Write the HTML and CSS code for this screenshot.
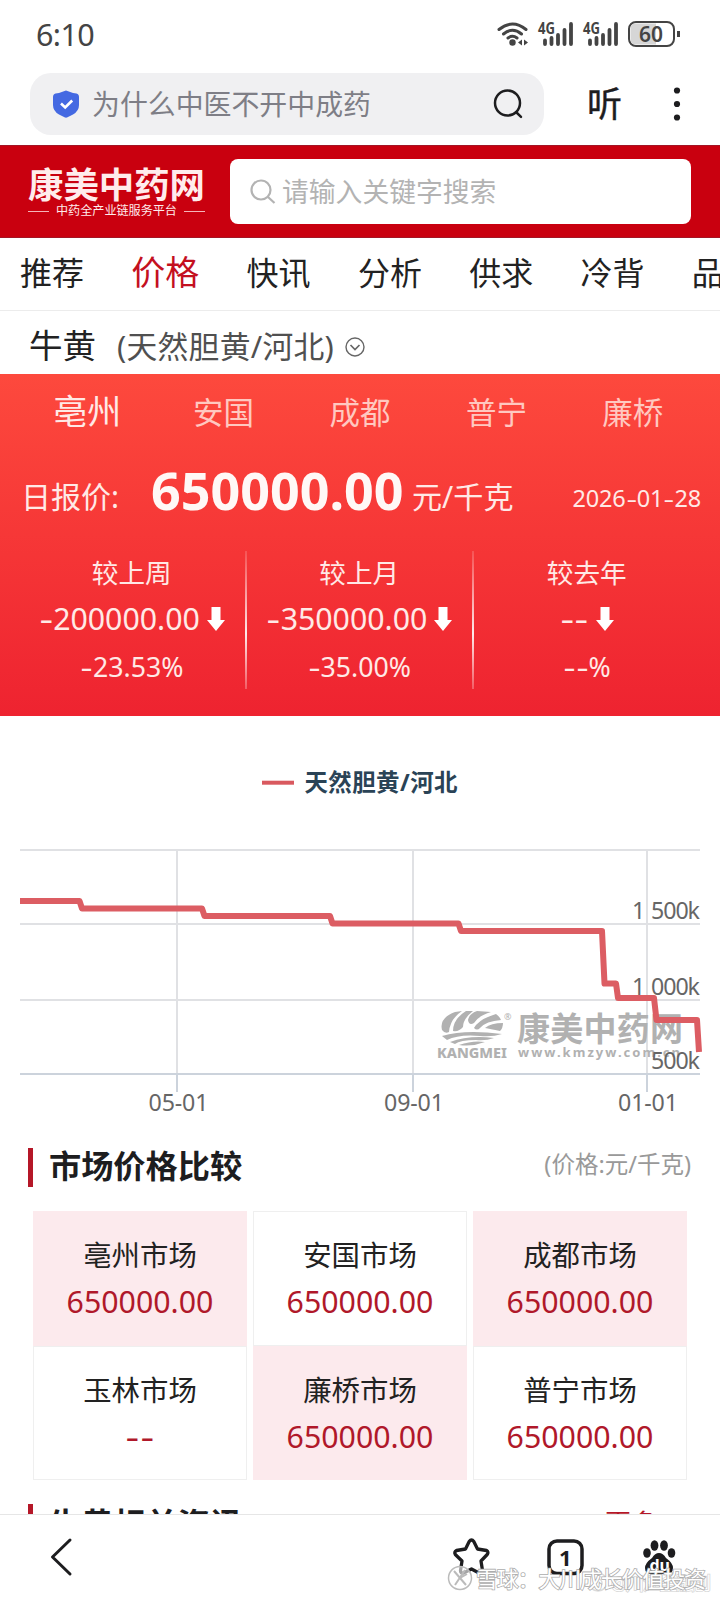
FILE: index.html
```
<!DOCTYPE html>
<html lang="zh-CN">
<head>
<meta charset="utf-8">
<title>康美中药网</title>
<link rel="stylesheet" href="styles.css">
</head>
<body>
<div class="phone">
  <div class="status">
    <span class="time">6:10</span>
    <svg class="status-icons" width="186" height="32" viewBox="494 18 186 32">
      <g fill="none" stroke="#444" stroke-width="3" stroke-linecap="round">
        <path d="M499 29.5Q512.500 18.500 526 29.500"/><path d="M503.500 34Q512.500 26.500 521.500 34"/><path d="M508 38Q512.500 34.500 517 38"/>
      </g>
      <circle cx="512.500" cy="42.500" r="3.200" fill="#444"/>
      <path d="M518 42.500l4-3v6zM528 42.500l-4-3v6z" fill="#444"/>
      <g id="sig">
        <text x="538" y="34" class="net" textLength="17" lengthAdjust="spacingAndGlyphs">4G</text>
        <path d="M545 40.500v3.500M551.500 38v6M558 35v9M564.500 30v14M571 24v20" stroke="#444" stroke-width="3.800" stroke-linecap="round"/>
      </g>
      <use href="#sig" x="45"/>
      <rect x="629" y="22" width="45" height="24" rx="7" fill="#fff" stroke="#444" stroke-width="2"/>
      <path d="M636 23.500h20v21h-20q-5.500 0-5.500-5.500v-10q0-5.500 5.500-5.500z" fill="#d6d6d6"/>
      <path d="M678.500 31v6" stroke="#444" stroke-width="3"/>
      <text x="639" y="41.500" class="batt" textLength="24" lengthAdjust="spacingAndGlyphs">60</text>
    </svg>
  </div>

  <div class="address">
    <div class="pill">
      <svg class="shield" width="26" height="28" viewBox="0 0 26 28"><path d="M13 .5Q19 3 23.500 3.500Q26 4 26 7V15Q26 21 20 24.500L14.500 27.300Q13 28 11.500 27.300L6 24.500Q0 21 0 15V7Q0 4 2.500 3.500Q7 3 13 .5Z" fill="#4469e2"/><path d="M8 13.500l4.200 4 7-7" fill="none" stroke="#fff" stroke-width="2.600"/></svg>
      <span class="query">为什么中医不开中成药</span>
      <svg width="30" height="30" viewBox="0 0 30 30" fill="none" stroke="#1d1d1f" stroke-width="2.500" stroke-linecap="round"><circle cx="14.500" cy="14" r="12.500"/><path d="M23 23l5 4.800"/></svg>
    </div>
    <span class="listen">听</span>
    <svg class="dots" width="8" height="36" viewBox="0 0 8 36" fill="#1d1d1f"><circle cx="4" cy="4.500" r="3.100"/><circle cx="4" cy="18" r="3.100"/><circle cx="4" cy="31.500" r="3.100"/></svg>
  </div>

  <header class="site">
    <div class="logo">
      <div class="logo-name">康美中药网</div>
      <div class="logo-tag"><i></i><span>中药全产业链服务平台</span><i></i></div>
    </div>
    <div class="search">
      <svg width="28" height="28" viewBox="0 0 28 28" fill="none" stroke="#b3b3b3" stroke-width="2.200"><circle cx="12" cy="12" r="9.500"/><path d="M19 19l6.500 6"/></svg>
      <span>请输入关键字搜索</span>
    </div>
  </header>

  <nav class="menu"><span>推荐</span><span class="on">价格</span><span>快讯</span><span>分析</span><span>供求</span><span>冷背</span><span>品</span></nav>

  <div class="product">
    <span class="pname">牛黄</span><span class="pspec">(天然胆黄/河北)</span>
    <svg width="20" height="20" viewBox="0 0 20 20" fill="none" stroke="#666" stroke-width="1.400"><circle cx="10" cy="10" r="9"/><path d="M5.500 8l4.500 4.500L14.500 8" stroke-width="1.700"/></svg>
  </div>

  <section class="panel">
    <div class="cities"><span class="on">亳州</span><span>安国</span><span>成都</span><span>普宁</span><span>廉桥</span></div>
    <div class="quote"><span class="qlabel">日报价:</span><strong>650000.00</strong><span class="unit">元/千克</span><span class="date">2026<em>-</em>01<em>-</em>28</span></div>
    <div class="stats">
      <div class="stat"><span class="st">较上周</span><span class="sv"><span><em>-</em>200000.00</span><svg width="18" height="24" viewBox="0 0 18 24"><path d="M4.500 0h9v13H18l-9 11L0 13h4.500z" fill="#fff"/></svg></span><span class="sp"><em>-</em>23.53%</span></div>
      <i class="rule"></i>
      <div class="stat"><span class="st">较上月</span><span class="sv"><span><em>-</em>350000.00</span><svg width="18" height="24" viewBox="0 0 18 24"><path d="M4.500 0h9v13H18l-9 11L0 13h4.500z" fill="#fff"/></svg></span><span class="sp"><em>-</em>35.00%</span></div>
      <i class="rule"></i>
      <div class="stat"><span class="st">较去年</span><span class="sv"><span><em>-</em><em>-</em></span><svg width="18" height="24" viewBox="0 0 18 24"><path d="M4.500 0h9v13H18l-9 11L0 13h4.500z" fill="#fff"/></svg></span><span class="sp"><em>-</em><em>-</em>%</span></div>
    </div>
  </section>

  <section class="chart">
    <svg width="720" height="414" viewBox="0 716 720 414">
      <path d="M262 782.700h32" stroke="#d9595f" stroke-width="4"/>
      <text x="304.500" y="791" class="legend" textLength="153">天然胆黄/河北</text>
      <path d="M20 850h680M20 924h680M20 1000h680M177 850v224M413 850v224M647 850v224" stroke="#e0e1e4" stroke-width="2"/>
      <path d="M20 1074h680M177 1074v18M413 1074v18M647 1074v18" stroke="#ccd3dc" stroke-width="2"/>
      <g fill="#b1b1b1">
        <path d="M442 1030Q439 1018 455 1012L462 1011Q450 1019 449 1032Q445 1034 442 1030ZM453 1031Q453 1019 466 1011L473 1011Q463 1019 463 1027Q459 1032 453 1031ZM468 1020Q469 1014 477 1011L491 1012Q478 1016 474 1023Q469 1026 468 1020ZM474 1028Q479 1019 496 1014Q500 1017 501 1020Q486 1021 480 1028Q477 1031 474 1028ZM485 1028Q491 1023 503 1023Q503 1028 500 1031Q490 1029 485 1028ZM442 1036Q465 1029 502 1034Q493 1037 480 1036Q459 1034 447 1040ZM450 1042Q469 1035 494 1038Q486 1041 476 1040Q460 1040 455 1044ZM459 1045Q473 1040 485 1042Q472 1047 459 1045Z"/>
        <text x="504" y="1020" class="reg">®</text>
        <text x="437" y="1058" class="wm-en" textLength="70" lengthAdjust="spacingAndGlyphs">KANGMEI</text>
        <text x="517" y="1041" class="wm-cn" textLength="166">康美中药网</text>
        <text x="518" y="1057" class="wm-url" textLength="162">www.kmzyw.com.cn</text>
      </g>
      <g class="axis">
        <text y="918.500"><tspan x="632">1 </tspan><tspan x="651" textLength="49">500k</tspan></text>
        <text y="994.500"><tspan x="632">1 </tspan><tspan x="651" textLength="49">000k</tspan></text>
        <text x="651" y="1069" textLength="49">500k</text>
        <text x="148.500" y="1111" textLength="60">05-01</text>
        <text x="384" y="1111" textLength="60">09-01</text>
        <text x="618" y="1111" textLength="60">01-01</text>
      </g>
      <path d="M20 901H79.500L82 908.500H202L204.500 916H330L332.500 923.500H458.500L461 931H602L604.500 983.500H616L618 998H654L656.500 1020H697L699 1052" fill="none" stroke="#dc5d63" stroke-width="6" stroke-linejoin="round"/>
    </svg>
  </section>

  <section class="market">
    <div class="head"><i></i><h2>市场价格比较</h2><span class="note">(价格:元/千克)</span></div>
    <div class="grid">
      <div class="cell pink"><span>亳州市场</span><b>650000.00</b></div>
      <div class="cell"><span>安国市场</span><b>650000.00</b></div>
      <div class="cell pink"><span>成都市场</span><b>650000.00</b></div>
      <div class="cell"><span>玉林市场</span><b><em>-</em><em>-</em></b></div>
      <div class="cell pink"><span>廉桥市场</span><b>650000.00</b></div>
      <div class="cell"><span>普宁市场</span><b>650000.00</b></div>
    </div>
  </section>

  <section class="news"><div class="head"><i></i><h2>牛黄相关资讯</h2><span class="more">更多</span></div></section>

  <footer class="toolbar">
    <svg class="tools" width="720" height="85" viewBox="0 1515 720 85">
      <g fill="none" stroke="#1d1d1f" stroke-width="3" stroke-linecap="round" stroke-linejoin="round">
        <path d="M70 1540L52.500 1557L70 1574"/>
        <path stroke-width="3.300" d="M469.200 1541.500Q471.500 1538.500 473.800 1541.500L477.500 1549L486.500 1550.500Q489 1552 487.200 1554.500L481 1561L482.500 1570.500Q482 1573.800 479 1573L471.500 1569L463.500 1573Q460.500 1573.500 460.500 1570.500L462 1561L455.300 1554.500Q453.800 1552 456.500 1550.500L465.500 1549Z"/>
        <rect x="549" y="1541" width="33" height="32.500" rx="8" stroke-width="3.500"/>
      </g>
      <text x="559" y="1566" class="tabs">1</text>
      <g fill="#1d1d1f"><ellipse cx="647" cy="1553" rx="3.800" ry="4.800"/><ellipse cx="654.500" cy="1545.500" rx="3.900" ry="5.200"/><ellipse cx="664" cy="1545.500" rx="3.900" ry="5.200"/><ellipse cx="671.500" cy="1553" rx="3.800" ry="4.800"/><path d="M659 1553Q663 1553 666 1558Q673 1563 673 1568Q673 1574 666 1574H652Q645 1574 645 1568Q645 1563 652 1558Q655 1553 659 1553Z"/></g>
      <text x="649.500" y="1571" class="du">du</text>
      <g class="mark2"><circle cx="598" cy="1582" r="9"/><circle cx="598" cy="1583" r="4"/><text x="611" y="1590" textLength="100">@川江金融创</text></g>
      <g class="mark1"><circle cx="460" cy="1578" r="11.500"/><path d="M454 1571l12 14M465 1570l-10 15M467 1574l-7 4"/><text x="476" y="1587" textLength="230">雪球：大川成长价值投资</text></g>
    </svg>
  </footer>
</div>
</body>
</html>
```
FILE: styles.css
```
* { box-sizing: border-box; }
body { margin: 0; background: #fff; font-family: "Noto Sans", "Noto Sans CJK SC", sans-serif; color: #222; }
.phone { width: 720px; height: 1600px; overflow: hidden; display: flex; flex-direction: column; }
.phone > * { flex: none; }
svg { display: block; flex: none; }
span, b, strong, h2 { white-space: nowrap; }
i { display: block; flex: none; }
/* wide, thin hyphen used in figures */
em { display: inline-block; width: .48em; text-align: center; font-style: normal; transform: scaleX(1.4); }

.status { height: 73px; padding: 17px 40px 0 36px; display: flex; justify-content: space-between; }
.status-icons { margin-top: 1px; }
.time { font-size: 30.5px; line-height: 34px; letter-spacing: -.6px; color: #444; }
.net { font-size: 16px; font-weight: 700; fill: #444; }
.batt { font-size: 21px; font-weight: 600; fill: #444; }

.address { height: 72px; padding-left: 30px; display: flex; align-items: flex-start; }
.pill { width: 514px; height: 62px; border-radius: 21px; background: #f0f0f2; padding: 0 21px 0 23px; display: flex; align-items: center; }
.query { flex: 1; margin-left: 13px; font-size: 27.9px; line-height: 62px; color: #7e7e86; }
.listen { margin-left: 43px; font-size: 35px; line-height: 61px; color: #1d1d1f; -webkit-text-stroke: .4px #1d1d1f; }
.dots { margin: 13px 0 0 51px; }

.site { height: 93px; background: #c9000f; padding: 13px 29px 0 28px; display: flex; justify-content: space-between; border-top: 1px solid #a31525; border-bottom: 1px solid #a31525; }
.logo { width: 177px; color: #ffecec; }
.logo-name { font-size: 35.400px; line-height: 38px; margin-top: 6px; font-weight: 700; }
.logo-tag { display: flex; align-items: center; justify-content: space-between; font-size: 12.1px; line-height: 14px; margin-top: 1px; }
.logo-tag i { width: 21px; height: 1px; background: #f5b5b9; }
.search { width: 461px; height: 65px; background: #fff; border-radius: 8px; padding-left: 19px; display: flex; align-items: center; gap: 5px; color: #b3b3b3; font-size: 26.800px; line-height: 65px; }

.menu { height: 73px; border-bottom: 1px solid #ececec; padding: 0 0 0 20px; display: flex; gap: 47.300px; font-size: 32px; line-height: 70px; overflow: hidden; }
.menu .on { font-size: 34px; line-height: 68px; color: #c4101f; }
.product { height: 63px; padding: 0 29px; display: flex; align-items: center; }
.pname { font-size: 33.500px; line-height: 63px; padding-top: 5px; }
.pspec { font-size: 30.800px; line-height: 63px; padding-top: 7px; margin-left: 21px; color: #505050; letter-spacing: .25px; }
.product svg { margin: 9px 0 0 11px; }

.panel { height: 342px; background: linear-gradient(#fd493d, #ee2330); color: #ffe9e6; }
.cities { height: 78px; padding: 0 19px; display: grid; grid-template-columns: repeat(5, 1fr); text-align: center; font-size: 30.500px; line-height: 77px; color: #ffc8c0; }
.cities .on { font-size: 34px; line-height: 74px; color: #ffe9e6; }
.quote { height: 99px; padding: 0 19px 0 21px; display: flex; align-items: flex-start; line-height: 77px; }
.qlabel { font-size: 30px; width: 130px; line-height: 89px; }
.quote strong { font-size: 52px; line-height: 76px; width: 261px; color: #fff8f6; }
.unit { font-size: 30.100px; line-height: 89px; }
.date { margin-left: auto; font-size: 23.500px; line-height: 93px; letter-spacing: -.2px; }
.stats { display: flex; height: 138px; padding-left: 18px; }
.stat { width: 227.500px; display: flex; flex-direction: column; align-items: center; }
.st { font-size: 26.600px; line-height: 44px; }
.sv { font-size: 30.300px; line-height: 48px; display: flex; align-items: center; gap: 7px; }
.sp { font-size: 26.700px; line-height: 47px; }
.rule { width: 2px; height: 138px; margin: 0 -1px; background: linear-gradient(rgba(255,255,255,.15), rgba(255,255,255,.9) 60%, rgba(255,255,255,.25)); }

.chart { height: 414px; }
.legend { font-size: 23.500px; font-weight: 700; fill: #2a4356; }
.axis { font-size: 23.200px; fill: #666; }
.wm-cn { font-size: 33px; font-weight: 700; }
.wm-en { font-size: 14px; font-weight: 800; }
.wm-url { font-size: 13px; font-weight: 700; }
.reg { font-size: 9px; }

.head { display: flex; align-items: flex-start; padding: 0 29px 0 28px; height: 39px; }
.head i { width: 5px; height: 39px; background: #b51728; }
.head h2 { margin: 0 auto 0 16px; font-size: 32.200px; line-height: 36px; font-weight: 700; color: #1d1d1f; }
.head .note { font-size: 23.500px; line-height: 32px; color: #999; }
.market { height: 374px; padding-top: 18px; }
.grid { margin: 24px 33px 0; display: grid; grid-template-columns: repeat(3, 214px); grid-template-rows: 135px 134px; column-gap: 6px; }
.cell { border: 1px solid #efefef; display: flex; flex-direction: column; align-items: center; padding-top: 22px; }
.cell.pink { background: #fceaed; border-color: #fceaed; }
.cell span { font-size: 28.400px; line-height: 42px; }
.cell b { font-size: 30.300px; line-height: 51px; font-weight: 400; color: #b0182a; }

.news { height: 10px; overflow: hidden; }
.news .head h2 { line-height: 40px; }
.news .more { font-size: 26px; line-height: 39px; color: #b51728; padding-right: 34px; }
.toolbar { height: 86px; border-top: 1px solid #e6e6e6; background: #fff; }
.tabs { font-size: 22px; font-weight: 700; fill: #1d1d1f; }
.du { font-size: 16px; font-weight: 700; fill: #fff; }
.mark1 circle { fill: rgba(255,255,255,.6); stroke: #bbb; stroke-width: 1.500px; }
.mark1 path { fill: none; stroke: #bbb; stroke-width: 2px; }
.mark1 text { font-size: 22px; fill: #fff; stroke: #adadad; stroke-width: 1.600px; paint-order: stroke; }
.mark2 { opacity: .7; }
.mark2 circle { fill: none; stroke: #ccc; stroke-width: 1.500px; }
.mark2 text { font-size: 18px; fill: #fff; stroke: #c4c4c4; stroke-width: 1.500px; paint-order: stroke; }
```
